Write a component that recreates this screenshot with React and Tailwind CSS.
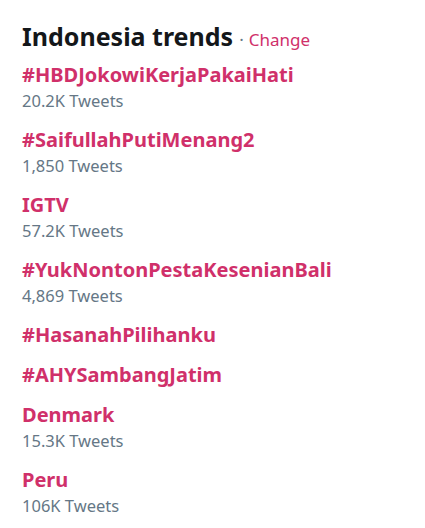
const trends = [
  { name: "#HBDJokowiKerjaPakaiHati", count: "20.2K Tweets" },
  { name: "#SaifullahPutiMenang2", count: "1,850 Tweets" },
  { name: "IGTV", count: "57.2K Tweets" },
  { name: "#YukNontonPestaKesenianBali", count: "4,869 Tweets" },
  { name: "#HasanahPilihanku" },
  { name: "#AHYSambangJatim" },
  { name: "Denmark", count: "15.3K Tweets" },
  { name: "Peru", count: "106K Tweets" },
]

export default function App() {
  return (
    <div className="w-[425px] h-[528px] bg-white overflow-hidden font-['Noto_Sans',sans-serif]">
      <div className="pl-[22px] pt-[20px]">
        <div className="flex items-baseline">
          <h2 className="text-[25px] font-bold leading-[32px] text-[#14171a]">Indonesia trends</h2>
          <span className="ml-[6px] text-[#657786] text-[17px]">·</span>
          <span className="ml-[5px] text-[17px] text-[#d0306a]">Change</span>
        </div>
        <ul className="mt-[2px]">
          {trends.map((t) => (
            <li key={t.name} className="py-[7px]">
              <div className="text-[20px] font-bold leading-[26px] text-[#d0306a]">{t.name}</div>
              {t.count && <div className="text-[16.5px] leading-[25px] text-[#657786]">{t.count}</div>}
            </li>
          ))}
        </ul>
      </div>
    </div>
  )
}
